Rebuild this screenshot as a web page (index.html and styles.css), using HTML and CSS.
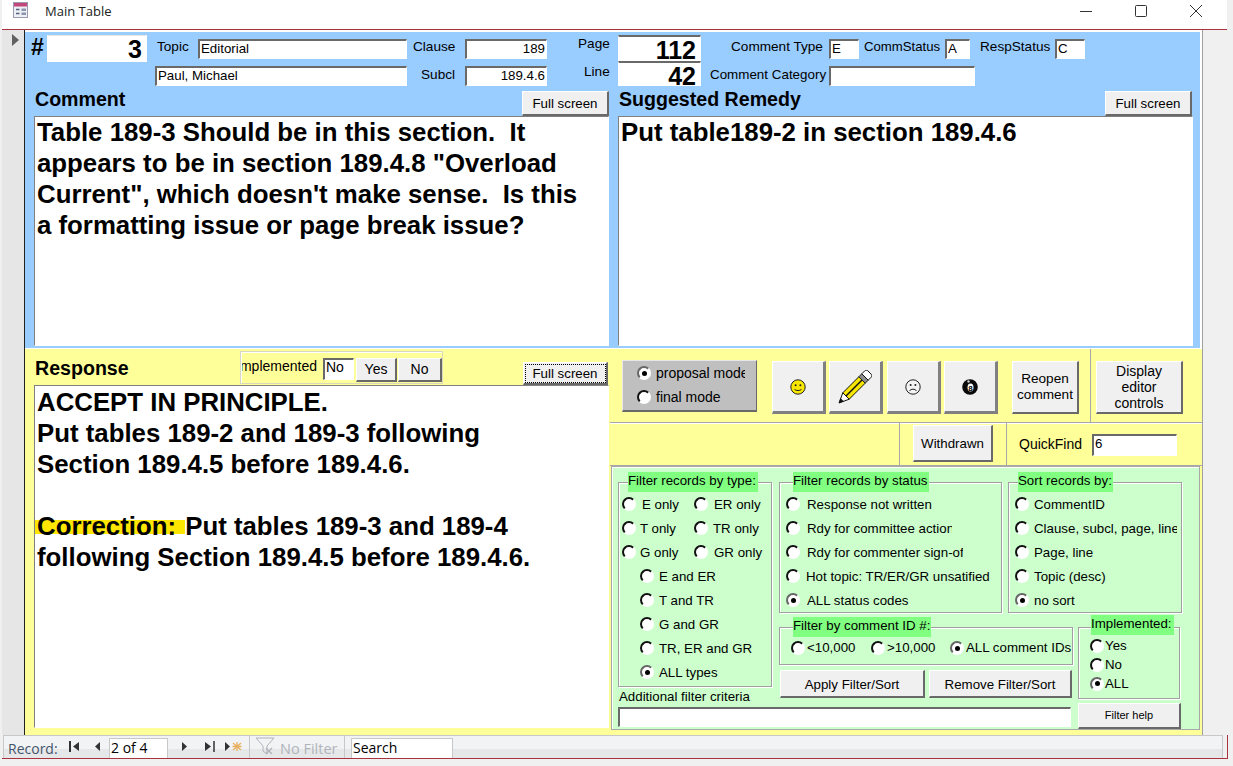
FILE: index.html
```html
<!DOCTYPE html>
<html lang="en">
<head>
<meta charset="utf-8">
<title>Main Table</title>
<link rel="stylesheet" href="styles.css">
</head>
<body>
<header class="titlebar">
  <svg class="app-icon" width="15" height="16" viewBox="0 0 15 16"><rect x="0.500" y="0.500" width="14" height="15" fill="#eef0f6" stroke="#9a9ab0"/><rect x="1" y="1" width="13" height="3.500" fill="#c2487a"/><path d="M3 7.500h3.500M3 11.500h3.500" stroke="#55607a" stroke-width="1.500"/><rect x="8.500" y="6.500" width="4.500" height="2.500" fill="#8a94ac"/><rect x="8.500" y="10.500" width="4.500" height="2.500" fill="#8a94ac"/></svg>
  <span class="app-title">Main Table</span>
  <div class="winctl">
    <svg width="14" height="14" viewBox="0 0 14 14"><path d="M1 7.500h12" stroke="#333"/></svg>
    <svg width="14" height="14" viewBox="0 0 14 14"><rect x="1.500" y="1.500" width="11" height="11" rx="1" fill="none" stroke="#333"/></svg>
    <svg width="14" height="14" viewBox="0 0 14 14"><path d="M1 1l12 12M13 1L1 13" stroke="#333"/></svg>
  </div>
</header>

<div class="workspace">
  <aside class="selector"><span class="sel-arrow"></span></aside>
  <main class="form">
    <section class="blue">
      <div class="hrow hrow-1">
        <span class="hash">#</span>
        <div class="num f-id">3</div>
        <span class="lbl l-topic">Topic</span>
        <div class="field f-topic">Editorial</div>
        <span class="lbl l-clause">Clause</span>
        <div class="field right f-clause">189</div>
        <span class="lbl l-page">Page</span>
        <div class="num f-page">112</div>
        <span class="lbl l-ctype">Comment Type</span>
        <div class="field f-ctype">E</div>
        <span class="lbl l-cstat">CommStatus</span>
        <div class="field f-cstat">A</div>
        <span class="lbl l-rstat">RespStatus</span>
        <div class="field f-rstat">C</div>
      </div>
      <div class="hrow hrow-2">
        <div class="field f-name">Paul, Michael</div>
        <span class="lbl l-subcl">Subcl</span>
        <div class="field right f-subcl">189.4.6</div>
        <span class="lbl l-line">Line</span>
        <div class="num f-line">42</div>
        <span class="lbl l-cat">Comment Category</span>
        <div class="field f-cat"></div>
      </div>
      <div class="text-cols">
        <div class="text-col">
          <div class="text-head"><h2 class="sec-title">Comment</h2><button class="btn full">Full screen</button></div>
          <div class="memo memo-top">Table 189-3 Should be in this section.&nbsp; It appears to be in section 189.4.8 "Overload Current", which doesn't make sense.&nbsp; Is this a formatting issue or page break issue?</div>
        </div>
        <div class="text-col">
          <div class="text-head"><h2 class="sec-title">Suggested Remedy</h2><button class="btn full">Full screen</button></div>
          <div class="memo memo-top">Put table189-2 in section 189.4.6</div>
        </div>
      </div>
    </section>

    <section class="yellow">
      <div class="resp-col">
        <div class="resp-head">
          <h2 class="sec-title resp-title">Response</h2>
          <div class="impl-box">
            <span class="impl-lbl"><span>Implemented</span></span>
            <div class="field f-impl">No</div>
            <button class="btn impl-btn">Yes</button>
            <button class="btn impl-btn">No</button>
          </div>
          <button class="btn full focus">Full screen</button>
        </div>
        <div class="memo memo-resp">
          <p>ACCEPT IN PRINCIPLE.</p>
          <p>Put tables 189-2 and 189-3 following</p>
          <p>Section 189.4.5 before 189.4.6.</p>
          <p class="blank">&nbsp;</p>
          <p><mark class="hl">Correction: </mark>Put tables 189-3 and 189-4</p>
          <p>following Section 189.4.5 before 189.4.6.</p>
        </div>
      </div>

      <div class="ctl-col">
        <div class="ctl-top">
          <div class="mode-box">
            <label class="opt mode-opt"><i class="radio on"></i><span class="mode-clip">proposal mode</span></label>
            <label class="opt mode-opt"><i class="radio"></i><span>final mode</span></label>
          </div>
          <button class="btn icon-btn b-smile" aria-label="happy"><svg width="16" height="16" viewBox="0 0 16 16"><circle cx="8" cy="8" r="7.200" fill="#f7e600" stroke="#222"/><circle cx="5.600" cy="6.200" r="1" fill="#222"/><circle cx="10.400" cy="6.200" r="1" fill="#222"/><path d="M4.400 10c1 2 6.200 2 7.200 0" fill="none" stroke="#222"/></svg></button>
          <button class="btn icon-btn" aria-label="edit"><svg width="34" height="34" viewBox="0 0 34 34"><path d="M4.800 22.800L20.800 6.800l6.400 6.400L11.200 29.200z" fill="#f6e500" stroke="#111"/><path d="M8 26L24 10" stroke="#111" stroke-width="1.500"/><path d="M20.800 6.800l3-3 6.400 6.400-3 3z" fill="#8c8c8c" stroke="#222"/><path d="M23.800 3.800l3-3c1-.8 2-.8 3 0l3.400 3.400c.8 1 .8 2 0 3l-3 3z" fill="#fff" stroke="#111"/><path d="M4.800 22.800l6.400 6.400L1 33z" fill="#fff" stroke="#111"/><path d="M1 33l1.400-5 3.600 3.600z" fill="#111"/></svg></button>
          <button class="btn icon-btn b-sad" aria-label="sad"><svg width="16" height="16" viewBox="0 0 16 16"><circle cx="8" cy="8" r="7.200" fill="#f4f4f4" stroke="#222"/><circle cx="5.600" cy="6" r="1" fill="#222"/><circle cx="10.400" cy="6" r="1" fill="#222"/><path d="M4.600 12c1-2.400 5.800-2.400 6.800 0" fill="none" stroke="#222"/></svg></button>
          <button class="btn icon-btn" aria-label="eight ball"><svg width="16" height="16" viewBox="0 0 16 16"><circle cx="8" cy="8" r="7.800" fill="#0a0a0a"/><circle cx="6.500" cy="2.500" r="1.200" fill="#ccc"/><ellipse cx="8.500" cy="8.500" rx="3" ry="4" fill="#fff"/><text x="8.500" y="11.600" text-anchor="middle" class="ball8">8</text></svg></button>
          <button class="btn reopen">Reopen comment</button>
          <div class="disp-cell"><button class="btn display">Display editor controls</button></div>
        </div>
        <div class="ctl-mid">
          <div class="mid-a"></div>
          <div class="mid-b"><button class="btn withdrawn">Withdrawn</button></div>
          <div class="mid-c"><span class="lbl quick-lbl">QuickFind</span><div class="field f-quick">6</div></div>
        </div>

        <div class="green">
          <div class="green-top">
            <fieldset class="group g-type">
              <legend class="lg">Filter records by type:</legend>
              <div class="opt-row"><label class="opt o-a"><i class="radio"></i><span class="t-e">E only</span></label><label class="opt o-b"><i class="radio"></i><span class="t-er">ER only</span></label></div>
              <div class="opt-row"><label class="opt o-a"><i class="radio"></i><span>T only</span></label><label class="opt o-b"><i class="radio"></i><span>TR only</span></label></div>
              <div class="opt-row"><label class="opt o-a"><i class="radio"></i><span>G only</span></label><label class="opt o-b"><i class="radio"></i><span class="t-er">GR only</span></label></div>
              <div class="opt-row in"><label class="opt"><i class="radio"></i><span>E and ER</span></label></div>
              <div class="opt-row in"><label class="opt"><i class="radio"></i><span>T and TR</span></label></div>
              <div class="opt-row in"><label class="opt"><i class="radio"></i><span>G and GR</span></label></div>
              <div class="opt-row in"><label class="opt"><i class="radio"></i><span>TR, ER and GR</span></label></div>
              <div class="opt-row in"><label class="opt"><i class="radio on"></i><span>ALL types</span></label></div>
            </fieldset>
            <div class="green-right">
              <div class="gr-row">
                <fieldset class="group g-status">
                  <legend class="lg">Filter records by status</legend>
                  <div class="opt-row"><label class="opt"><i class="radio"></i><span class="clip">Response not written</span></label></div>
                  <div class="opt-row"><label class="opt"><i class="radio"></i><span class="clip c-action">Rdy for committee action</span></label></div>
                  <div class="opt-row"><label class="opt"><i class="radio"></i><span class="clip c-signoff">Rdy for commenter sign-off</span></label></div>
                  <div class="opt-row"><label class="opt"><i class="radio"></i><span class="clip c-hot">Hot topic: TR/ER/GR unsatified</span></label></div>
                  <div class="opt-row"><label class="opt"><i class="radio on"></i><span class="clip">ALL status codes</span></label></div>
                </fieldset>
                <fieldset class="group g-sort">
                  <legend class="lg">Sort records by:</legend>
                  <div class="opt-row"><label class="opt"><i class="radio"></i><span class="clip">CommentID</span></label></div>
                  <div class="opt-row"><label class="opt"><i class="radio"></i><span class="clip">Clause, subcl, page, line</span></label></div>
                  <div class="opt-row"><label class="opt"><i class="radio"></i><span class="clip">Page, line</span></label></div>
                  <div class="opt-row"><label class="opt"><i class="radio"></i><span class="clip">Topic (desc)</span></label></div>
                  <div class="opt-row"><label class="opt"><i class="radio on"></i><span class="clip">no sort</span></label></div>
                </fieldset>
              </div>
              <div class="gr-row2">
                <div class="id-col">
                  <fieldset class="group g-id">
                    <legend class="lg">Filter by comment ID #:</legend>
                    <div class="id-row">
                      <label class="opt id-a"><i class="radio"></i><span>&lt;10,000</span></label>
                      <label class="opt id-b"><i class="radio"></i><span>&gt;10,000</span></label>
                      <label class="opt id-c"><i class="radio on"></i><span>ALL comment IDs</span></label>
                    </div>
                  </fieldset>
                  <div class="apply-row">
                    <button class="btn apply">Apply Filter/Sort</button>
                    <button class="btn remove">Remove Filter/Sort</button>
                  </div>
                </div>
                <fieldset class="group g-impl">
                  <legend class="lg">Implemented:</legend>
                  <label class="opt impl-opt"><i class="radio"></i><span>Yes</span></label>
                  <label class="opt impl-opt"><i class="radio"></i><span>No</span></label>
                  <label class="opt impl-opt"><i class="radio on"></i><span>ALL</span></label>
                </fieldset>
              </div>
            </div>
          </div>
          <div class="green-bottom">
            <div class="extra">
              <div class="extra-lbl">Additional filter criteria</div>
              <div class="field f-extra"></div>
            </div>
            <button class="btn help">Filter help</button>
          </div>
        </div>
      </div>
    </section>
  </main>
</div>

<footer class="nav">
  <div class="nav-bar">
    <span class="nav-rec">Record:</span>
    <svg class="n-first" width="11" height="11" viewBox="0 0 11 11"><path d="M1 0v11" stroke="#333" stroke-width="2"/><path d="M10 1v9L4 5.500z" fill="#333"/></svg>
    <svg class="n-prev" width="7" height="11" viewBox="0 0 7 11"><path d="M6 1v9L1 5.500z" fill="#333"/></svg>
    <div class="nav-box n-cur">2 of 4</div>
    <svg class="n-next" width="7" height="11" viewBox="0 0 7 11"><path d="M1 1v9l5-4.500z" fill="#333"/></svg>
    <svg class="n-last" width="11" height="11" viewBox="0 0 11 11"><path d="M1 1v9l6-4.500z" fill="#333"/><path d="M10 0v11" stroke="#333" stroke-width="1.500"/></svg>
    <svg class="n-new" width="19" height="11" viewBox="0 0 19 11"><path d="M1 1v9l5-4.500z" fill="#333"/><path d="M9 2l8 7M17 2L9 9M13 1v9M8.500 5.500h9" stroke="#e8b060" stroke-width="1.300"/></svg>
    <span class="nav-sep s-a"></span>
    <svg class="n-filter" width="20" height="18" viewBox="0 0 20 18"><path d="M1 1h18l-7 8v8l-4-3V9z" fill="none" stroke="#b0b4ba"/><path d="M11 11l6 6M17 11l-6 6" stroke="#b0b4ba" stroke-width="1.400"/></svg>
    <span class="nav-nofilter">No Filter</span>
    <span class="nav-sep s-b"></span>
    <div class="nav-box n-search">Search</div>
  </div>
</footer>
</body>
</html>
```
FILE: styles.css
```css
* { box-sizing: border-box; }
html, body { margin: 0; padding: 0; }
body {
  width: 1233px; height: 766px; overflow: hidden;
  background: #f0f0f0; color: #000;
  font: 13.3px/16px "Liberation Sans", Arial, sans-serif;
}
h2, p { margin: 0; }

/* title bar */
.titlebar {
  height: 30px; background: #fff; display: flex; align-items: flex-start;
  border-bottom: 1px solid #a8323e; margin-left: 2px; width: 1225px;
}
.app-icon { margin: 2px 0 0 11px; }
.app-title { margin: 3px 0 0 17px; font: 13px/16px "Open Sans", sans-serif; color: #222; }
.winctl { margin-left: auto; display: flex; gap: 41px; padding: 4px 24px 0 0; }

/* shell */
.workspace { display: flex; height: 705px; margin-left: 2px; }
.selector { width: 23px; background: #e6e6e6; border-right: 1px solid #222; flex: none; padding: 4px 0 0 10px; }
.sel-arrow { display: block; width: 0; height: 0; border-left: 7px solid #606060; border-top: 6px solid transparent; border-bottom: 6px solid transparent; }
.form { width: 1178px; background: #fff; padding-top: 2px; border-right: 1px solid #a0a0a0; display: flex; flex-direction: column; flex: none; }

/* blue header */
.blue { background: #99ccff; height: 316px; width: 1175px; flex: none; }
.hrow { display: flex; align-items: flex-start; }
.hrow-1 { height: 29px; padding-left: 6px; }
.hrow-2 { height: 30px; padding-left: 130px; }
.hash { width: 16px; font: bold 23px/26px "Liberation Sans", sans-serif; margin-top: 2px; }
.lbl { white-space: nowrap; font-size: 13.6px; line-height: 16px; }
.field {
  background: #fff; font-size: 13.300px; line-height: 15px; height: 20px; padding: 0 1px; overflow: hidden; white-space: nowrap;
  border-style: solid; border-width: 2px 1px 1px 2px; border-color: #696969 #fff #fff #696969;
}
.field.right { text-align: right; }
.num {
  background: #fff; text-align: right; font: bold 25px/22px "Liberation Sans", sans-serif; padding: 2px 4px 0 0;
  border: 1px solid #fff; border-top: 1px solid #e8e8e8;
}
.f-id { width: 100px; height: 27px; margin-top: 3px; }
.l-topic { width: 33px; margin: 7px 0 0 10px; }
.f-topic { width: 209px; margin: 7px 0 0 8px; }
.l-clause { width: 42px; margin: 7px 0 0 6px; }
.f-clause { width: 82px; margin: 7px 0 0 10px; }
.l-page { width: 33px; margin: 4px 0 0 31px; }
.f-page { width: 83px; height: 26px; margin: 3px 0 0 7px; border-top: 2px solid #696969; }
.l-ctype { width: 92px; margin: 7px 0 0 30px; }
.f-ctype { width: 30px; margin: 7px 0 0 6px; }
.l-cstat { width: 76px; margin: 7px 0 0 5px; font-size: 13.2px; }
.f-cstat { width: 25px; margin: 7px 0 0 5px; }
.l-rstat { width: 70px; margin: 7px 0 0 10px; }
.f-rstat { width: 30px; margin: 7px 0 0 5px; }
.f-name { width: 252px; margin-top: 5px; }
.l-subcl { width: 34px; margin: 6px 0 0 14px; }
.f-subcl { width: 82px; margin: 5px 0 0 10px; }
.l-line { width: 24px; margin: 3px 0 0 37px; }
.f-line { width: 83px; height: 25px; margin-left: 10px; border-top: 2px solid #696969; }
.l-cat { width: 115px; margin: 6px 0 0 9px; font-size: 13.4px; }
.f-cat { width: 146px; margin: 5px 0 0 4px; }

.text-cols { display: flex; padding-left: 9px; gap: 9px; }
.text-col { width: 575px; flex: none; }
.text-head { height: 25px; display: flex; justify-content: space-between; align-items: flex-start; }
.text-col:last-child .full { margin-right: 1px; }
.sec-title { font: bold 19.6px/20px "Liberation Sans", sans-serif; margin: -2px 0 0 1px; }
.memo {
  background: #fff; font: bold 25.8px/31px "Liberation Sans", sans-serif; padding: 0 2px 0 2px; overflow: hidden;
  border-style: solid; border-width: 1px; border-color: #808080 #fff #fff #808080;
}
.memo-top { height: 230px; padding-right: 24px; }

.btn {
  font: 13.3px/15px "Liberation Sans", sans-serif; color: #000; background: #f0f0f0; padding: 0; margin: 0;
  border-style: solid; border-width: 1px 2px 2px 1px; border-color: #fff #696969 #696969 #fff;
}
.full { width: 87px; height: 25px; flex: none; }
.full.focus { width: 85px; height: 23px; outline: 1px dotted #000; outline-offset: -3px; margin-top: 13px; margin-right: 1px; }

/* yellow */
.yellow { background: #ffff99; flex: 1; display: flex; margin-top: 1px; padding-bottom: 3px; }
.resp-col { width: 585px; padding-left: 9px; flex: none; }
.resp-head { height: 36px; display: flex; align-items: flex-start; }
.resp-title { margin: 9px 0 0 1px; width: 205px; flex: none; }
.impl-box { width: 203px; height: 33px; margin-top: 2px; display: flex; align-items: flex-start; border: 1px solid #d8d8c0; padding: 6px 0 0 1px; box-shadow: inset 1px 1px 0 #fff; }
.impl-lbl { width: 75px; display: flex; justify-content: flex-end; overflow: hidden; white-space: nowrap; flex: none; font-size: 14px; }
.f-impl { width: 31px; height: 22px; margin-left: 6px; font-size: 14px; }
.impl-btn { width: 41px; height: 24px; margin-left: 2px; font-size: 14px; }
.impl-btn + .impl-btn { width: 44px; margin-left: 1px; }
.resp-head .full.focus { margin-left: 80px; }
.memo-resp { height: 343px; width: 575px; padding-top: 1px; }
.hl { color: inherit; padding: 0 2px 0 3px; margin-left: -3px; background: linear-gradient(transparent 8px, #ffe600 8px, #ffe600 22px, transparent 22px); }

.ctl-col { flex: 1; min-width: 0; display: flex; flex-direction: column; }
.ctl-top { height: 74px; display: flex; align-items: flex-start; border-bottom: 1px solid #a8a8a8; box-shadow: 0 1px 0 #fff; padding-left: 12px; }
.mode-box { width: 135px; height: 52px; margin-top: 11px; background: #bfbfbf; border-style: solid; border-width: 1px 1px 2px 1px; border-color: #e8e8e8 #696969 #696969 #e8e8e8; padding: 0 0 0 14px; display: flex; flex-direction: column; font-size: 14px; }
.mode-opt { height: 24px; }
.mode-opt span { margin: -1px 0 0 5px; }
.mode-opt .mode-clip { width: 89px; overflow: hidden; white-space: nowrap; }
.icon-btn { width: 54px; height: 53px; margin-top: 12px; margin-left: 3px; display: flex; align-items: center; justify-content: center; border-width: 1px 3px 3px 1px; border-color: #fff #808080 #808080 #fff; }
.b-smile { margin-left: 15px; }
.b-sad { margin-left: 4px; }
.ball8 { font: bold 8px "Liberation Sans", sans-serif; fill: #000; }
.reopen { width: 67px; height: 53px; margin: 12px 0 0 14px; font-size: 13.6px; line-height: 16px; padding: 0 2px; }
.disp-cell { margin-left: 11px; height: 74px; border-left: 1px solid #a8a8a8; padding: 12px 0 0 5px; }
.display { width: 87px; height: 53px; font-size: 14px; line-height: 16px; padding: 0 10px; }

.ctl-mid { height: 43px; display: flex; border-bottom: 1px solid #a8a8a8; }
.mid-a { width: 290px; border-right: 1px solid #a8a8a8; }
.mid-b { width: 107px; border-right: 1px solid #a8a8a8; padding: 2px 0 0 13px; }
.withdrawn { width: 80px; height: 37px; }
.mid-c { display: flex; align-items: flex-start; padding: 13px 0 0 12px; }
.quick-lbl { width: 73px; font-size: 14px; }
.f-quick { width: 85px; height: 22px; margin-top: -2px; }

/* green */
.green { background: #ccffcc; height: 264px; width: 589px; border: 1px solid #a8a8a8; margin-left: 1px; box-shadow: inset 1px 1px 0 #fff; padding: 5px 0 0 6px; }
.green-top { display: flex; height: 231px; gap: 7px; }
.group { margin: 0; padding: 0; min-width: 0; border: 1px solid #a0a0a0; box-shadow: 1px 1px 0 #fff, inset 1px 1px 0 #fff; }
.lg { background: #80ff80; height: 20px; line-height: 18px; padding: 0; white-space: nowrap; }
.g-type { width: 154px; height: 215px; }
.g-type .lg { margin-left: 9px; width: 130px; }
.green-right { display: flex; flex-direction: column; }
.gr-row { display: flex; gap: 6px; height: 141px; }
.g-status { width: 223px; height: 141px; }
.g-status .lg { margin-left: 13px; width: 136px; }
.g-sort { width: 174px; height: 141px; }
.g-sort .lg { margin-left: 9px; width: 95px; }
.opt-row { height: 24px; display: flex; align-items: center; }
.opt { display: flex; align-items: center; white-space: nowrap; }
.opt-row .opt span { padding-top: 1px; }
.radio { display: block; position: relative; flex: none; width: 14px; height: 14px; border-radius: 50%; background: #fff; border: 2px solid; border-color: #111 #fff #fff #111; }
.radio.on { border-color: #666 #fff #fff #666; }
.radio.on::after { content: ""; position: absolute; left: 2.500px; top: 2.500px; width: 5px; height: 5px; border-radius: 50%; background: #000; }
.g-type .opt-row { padding-left: 3px; }
.g-type .opt-row.in { padding-left: 21px; }
.o-a { width: 72px; }
.o-a span { margin-left: 4px; }
.o-a .t-e { margin-left: 6px; }
.o-b span { margin-left: 5px; }
.o-b .t-er { margin-left: 6px; }
.in span { margin-left: 5px; }
.g-status .opt-row { padding-left: 6px; }
.g-status .opt span { margin-left: 7px; }
.clip { display: block; overflow: hidden; }
.g-status .c-action { width: 145px; }
.g-status .c-signoff { width: 156px; }
.g-status .opt .c-hot { margin-left: 6px; }
.g-sort .opt-row { padding-left: 6px; }
.g-sort .opt span { margin-left: 5px; }
.g-sort .clip { width: 143px; }
.gr-row2 { display: flex; gap: 5px; }
.id-col { width: 294px; flex: none; }
.g-id { width: 294px; height: 48px; margin-top: 4px; }
.g-id .lg { margin-left: 13px; width: 138px; }
.id-row { display: flex; height: 22px; align-items: center; padding-left: 11px; }
.id-a { width: 80px; }
.id-b { width: 79px; }
.id-a span, .id-b span, .id-c span { margin-left: 2px; }
.apply-row { display: flex; gap: 4px; margin: 5px 0 0 1px; }
.apply { width: 145px; height: 28px; padding-top: 1px; }
.remove { width: 143px; height: 28px; padding-top: 1px; }
.g-impl { width: 102px; height: 82px; margin-top: 4px; }
.g-impl .lg { margin-left: 12px; width: 83px; position: relative; top: -2px; }
.impl-opt { height: 19px; padding-left: 11px; margin-top: -1px; }
.impl-opt:not(:first-of-type) { margin-top: 0; }
.impl-opt span { margin-left: 1px; }
.green-bottom { display: flex; align-items: flex-start; gap: 7px; }
.extra { width: 453px; margin-top: -14px; }
.extra-lbl { height: 17px; margin-left: 1px; }
.f-extra { width: 453px; height: 20px; margin-top: 1px; }
.help { width: 103px; height: 26px; font-size: 11px; }

/* nav */
.nav { height: 24px; margin-left: 2px; width: 1226px; border-bottom: 1px solid #a8323e; border-right: 1px solid #a8323e; }
.nav-bar { margin-left: 1px; width: 1220px; height: 23px; background: linear-gradient(#f2f3f5 0, #f2f3f5 13px, #e6e7e9 13px); border: 1px solid #c8c8c8; border-bottom: 0; display: flex; align-items: flex-start; overflow: hidden; font: 14px/18px "Open Sans", sans-serif; }
.nav-rec { margin: 4px 0 0 4px; width: 53px; color: #44546a; }
.n-first { margin: 5px 0 0 8px; }
.n-prev { margin: 5px 0 0 14px; }
.nav-box { background: #fff; border: 1px solid #c8c8c8; border-bottom: 0; height: 20px; margin-top: 2px; padding-left: 1px; color: #000; }
.n-cur { width: 59px; margin-left: 8px; }
.n-next { margin: 5px 0 0 13px; }
.n-last { margin: 5px 0 0 16px; }
.n-new { margin: 5px 0 0 9px; }
.nav-sep { width: 1px; height: 23px; background: #c8c8c8; }
.s-a { margin-left: 6px; }
.n-filter { margin: 1px 0 0 5px; }
.nav-nofilter { margin: 4px 0 0 5px; width: 59px; color: #b0b4ba; white-space: nowrap; font-size: 14.5px; }
.s-b { margin-left: 5px; }
.n-search { width: 102px; margin-left: 6px; }
```
